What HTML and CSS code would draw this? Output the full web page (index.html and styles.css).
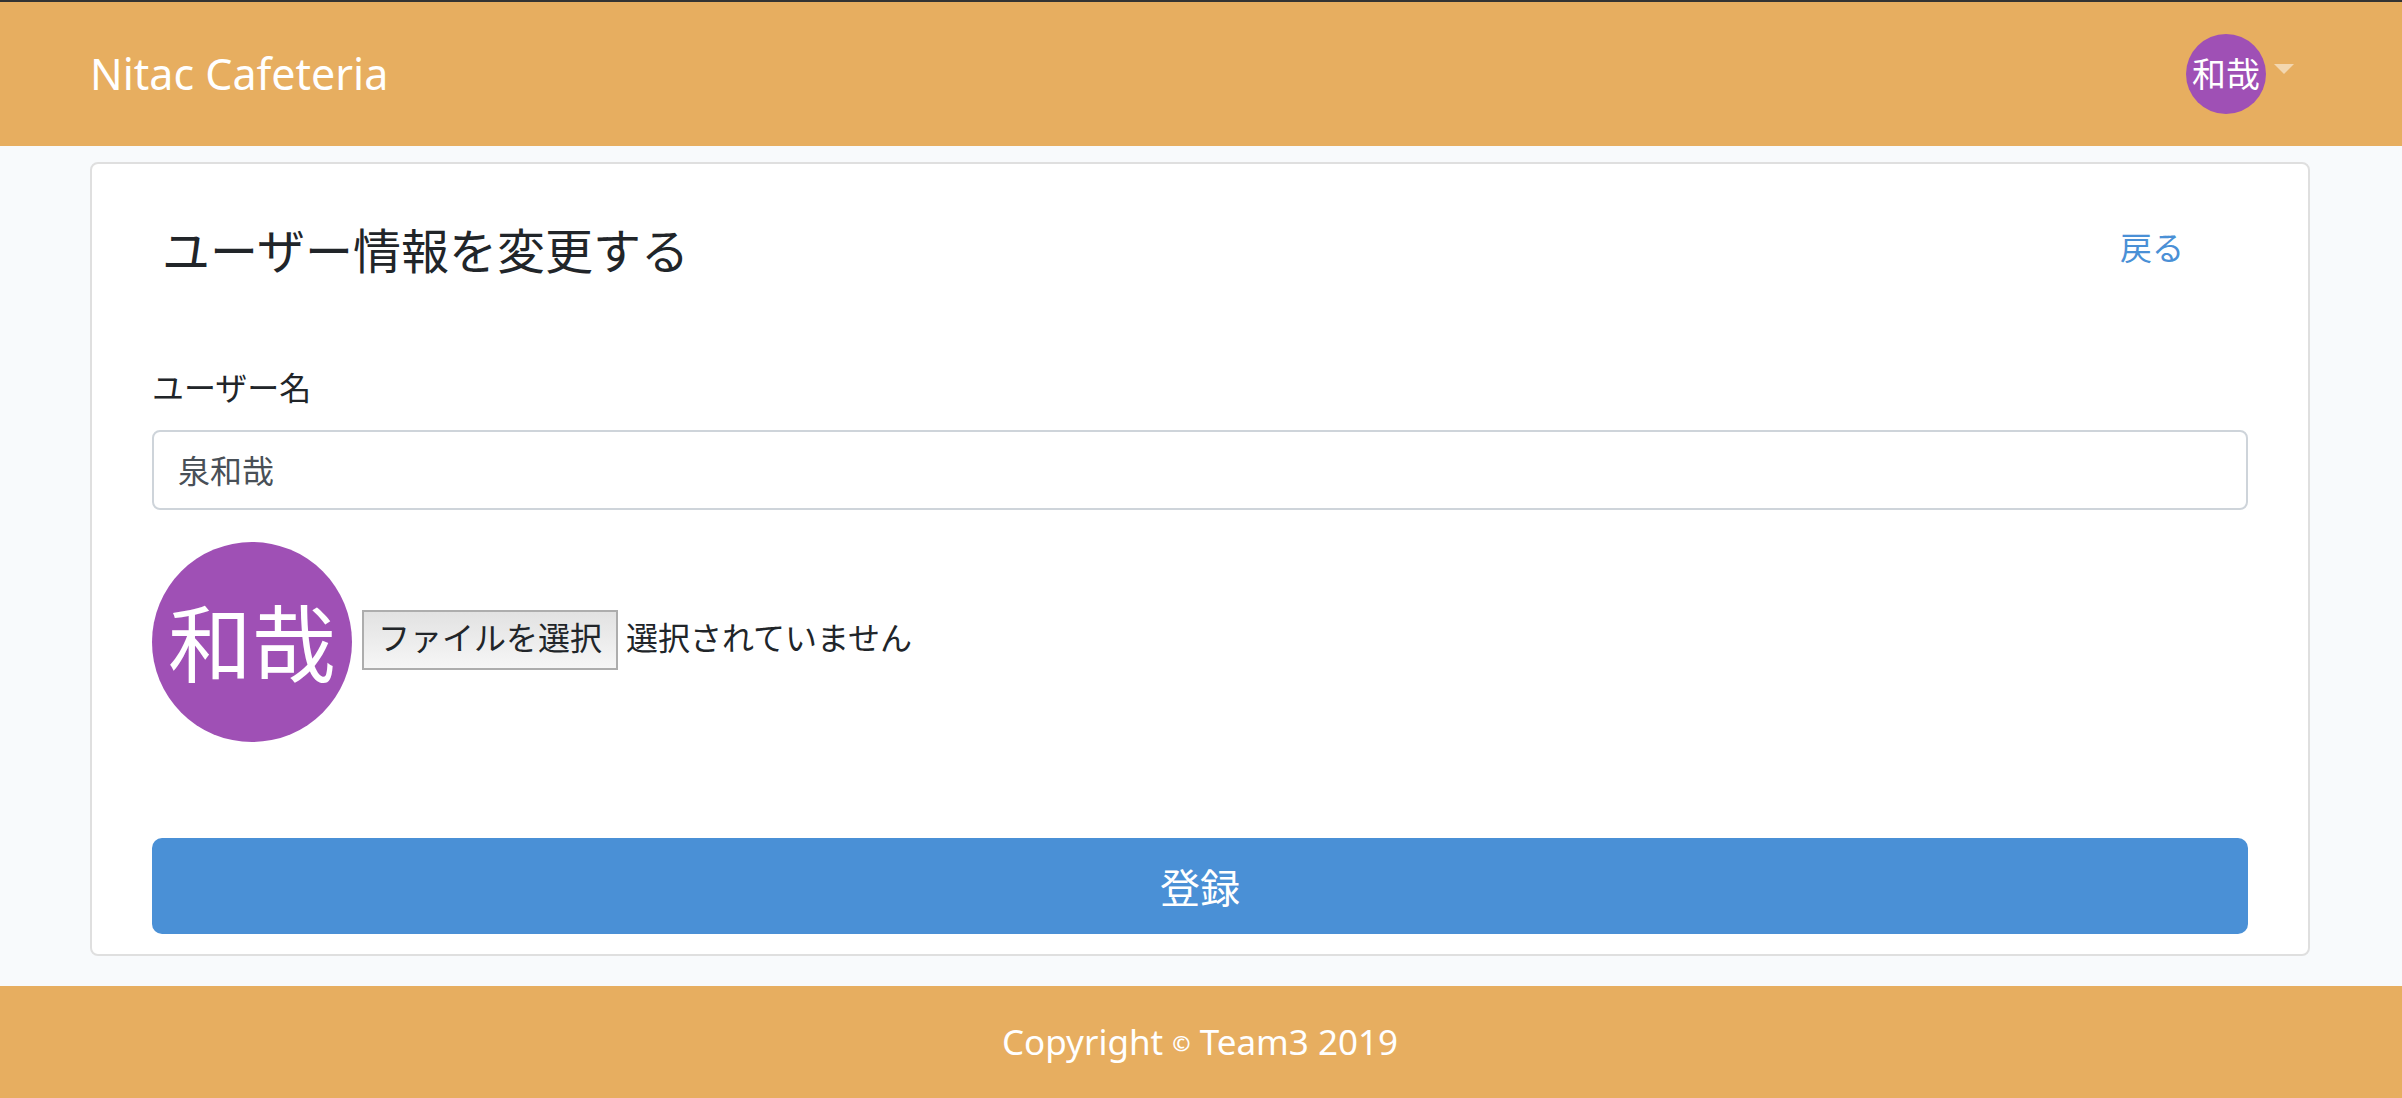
FILE: index.html
```html
<!DOCTYPE html>
<html lang="ja">
<head>
  <meta charset="utf-8">
  <meta name="viewport" content="width=device-width, initial-scale=1">
  <title>Nitac Cafeteria</title>
  <link rel="stylesheet" href="styles.css">
</head>
<body>
  <header class="navbar">
    <a class="brand" href="#">Nitac Cafeteria</a>
    <button class="user-menu" type="button" aria-haspopup="true">
      <span class="avatar avatar-small">和哉</span>
      <span class="caret"></span>
    </button>
  </header>

  <main class="content">
    <section class="card">
      <div class="card-head">
        <h1 class="title">ユーザー情報を変更する</h1>
        <a class="back" href="#">戻る</a>
      </div>
      <form class="form">
        <label class="label" for="name">ユーザー名</label>
        <input class="text-input" id="name" type="text" value="泉和哉">
        <div class="picture">
          <span class="avatar avatar-large">和哉</span>
          <div class="picker">
            <label class="picker-button" for="picture">ファイルを選択</label>
            <span class="picker-status">選択されていません</span>
            <input class="picker-input" id="picture" type="file">
          </div>
        </div>
        <button class="submit" type="submit">登録</button>
      </form>
    </section>
  </main>

  <footer class="footer">Copyright <small class="mark">©</small> Team3 2019</footer>
</body>
</html>
```
FILE: styles.css
```css
*,
*::before,
*::after {
  box-sizing: border-box;
}

body {
  margin: 0;
  min-height: 100vh;
  display: flex;
  flex-direction: column;
  border-top: 2px solid #333;
  background: #f8fafc;
  color: #212529;
  font-family: "Noto Sans CJK JP", sans-serif;
  font-size: 32px;
  line-height: 48px;
}

button,
input {
  font: inherit;
}

.navbar {
  display: flex;
  align-items: center;
  justify-content: space-between;
  padding: 32px 108px 32px 90px;
  background: #e7ae60;
}

.brand {
  color: #fff;
  font-family: "Noto Sans", "Noto Sans CJK JP", sans-serif;
  font-size: 43px;
  text-decoration: none;
}

.user-menu {
  display: flex;
  align-items: center;
  gap: 8px;
  padding: 0;
  border: 0;
  background: none;
}

.avatar {
  display: flex;
  flex: none;
  align-items: center;
  justify-content: center;
  border-radius: 50%;
  background: #9f50b5;
  color: #fff;
}

.avatar-small {
  width: 80px;
  height: 80px;
  padding-bottom: 2px;
  font-size: 34px;
}

.avatar-large {
  width: 200px;
  height: 200px;
  padding-bottom: 4px;
  font-size: 84px;
}

.caret {
  margin-bottom: 10px;
  border: 10px solid transparent;
  border-top-color: rgba(255, 255, 255, 0.5);
  border-bottom: 0;
}

.content {
  padding: 16px 92px 30px 90px;
}

.card {
  padding: 58px 60px 20px;
  border: 2px solid #dfdfdf;
  border-radius: 8px;
  background: #fff;
}

.card-head {
  display: flex;
  justify-content: space-between;
  padding: 0 64px 0 10px;
}

.title {
  margin: 0;
  font-size: 48px;
  font-weight: 400;
  line-height: 52px;
}

.back {
  color: #4a90d6;
  text-decoration: none;
}

.form {
  display: flex;
  flex-direction: column;
  margin-top: 88px;
}

.label {
  margin-bottom: 20px;
}

.text-input {
  width: 100%;
  height: 80px;
  padding: 12px 24px 14px;
  border: 2px solid #ced4da;
  border-radius: 8px;
  background: #fff;
  color: #495057;
}

.picture {
  display: flex;
  align-items: center;
  gap: 10px;
  margin-top: 32px;
}

.picker {
  position: relative;
  display: flex;
  align-items: baseline;
  gap: 8px;
  margin-bottom: 4px;
}

.picker-button {
  height: 60px;
  padding: 0 14px;
  border: 2px solid #adadad;
  background: linear-gradient(#e2e2e2, #f6f6f6);
}

.picker-input {
  position: absolute;
  inset: 0;
  width: 100%;
  opacity: 0;
}

.submit {
  height: 96px;
  margin-top: 96px;
  border: 0;
  border-radius: 10px;
  background: #4a90d6;
  color: #fff;
  font-size: 40px;
}

.footer {
  flex: 1;
  padding: 32px 92px 32px 90px;
  background: #e7ae60;
  color: #fff;
  font-family: "Noto Sans", "Noto Sans CJK JP", sans-serif;
  font-size: 35px;
  text-align: center;
}

.mark {
  font-size: 22px;
  font-weight: 700;
  line-height: 24px;
  vertical-align: 4px;
}
```
